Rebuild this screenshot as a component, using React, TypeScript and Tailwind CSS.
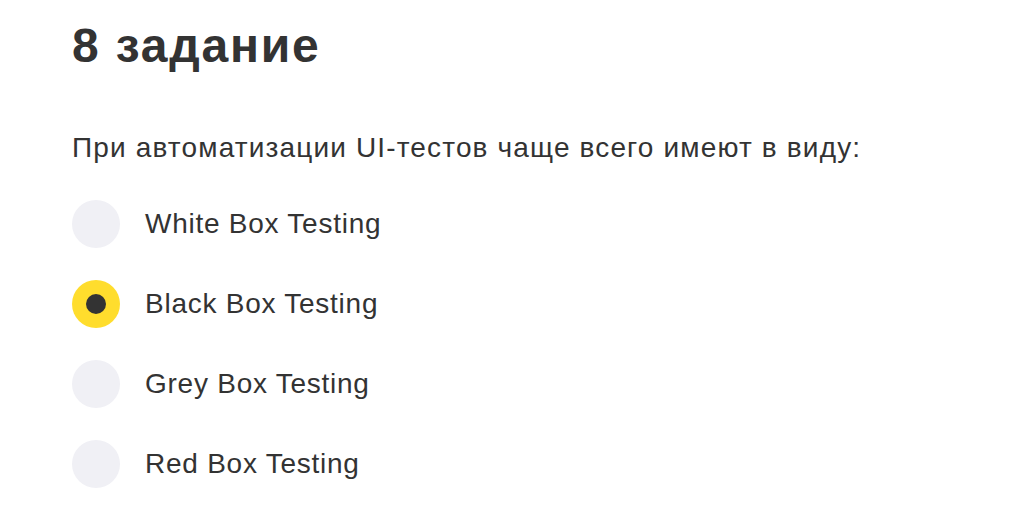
import React from "react";

const options = [
  { label: "White Box Testing", checked: false },
  { label: "Black Box Testing", checked: true },
  { label: "Grey Box Testing", checked: false },
  { label: "Red Box Testing", checked: false },
];

export default function App() {
  return (
    <div
      className="w-[1016px] h-[528px] bg-white text-[#333333] pl-[72px] pt-[18px] overflow-hidden"
      style={{ fontFamily: '"Liberation Sans", Arial, sans-serif' }}
    >
      <h1 className="text-[48px] leading-[56px] font-bold tracking-[1.8px]">8 задание</h1>
      <p className="mt-[58px] text-[28px] leading-[32px] tracking-[1.15px]">
        При автоматизации UI-тестов чаще всего имеют в виду:
      </p>
      <div className="mt-[36px] flex flex-col gap-[32px]">
        {options.map((o) => (
          <label key={o.label} className="flex items-center gap-[25px] h-[48px]">
            <span
              className={
                "w-[48px] h-[48px] rounded-full flex items-center justify-center " +
                (o.checked ? "bg-[#ffdd2d]" : "bg-[#f0f0f5]")
              }
            >
              {o.checked && <span className="w-[20px] h-[20px] rounded-full bg-[#333333]" />}
            </span>
            <span className="text-[28px] leading-[32px] tracking-[0.75px]">{o.label}</span>
          </label>
        ))}
      </div>
    </div>
  );
}
